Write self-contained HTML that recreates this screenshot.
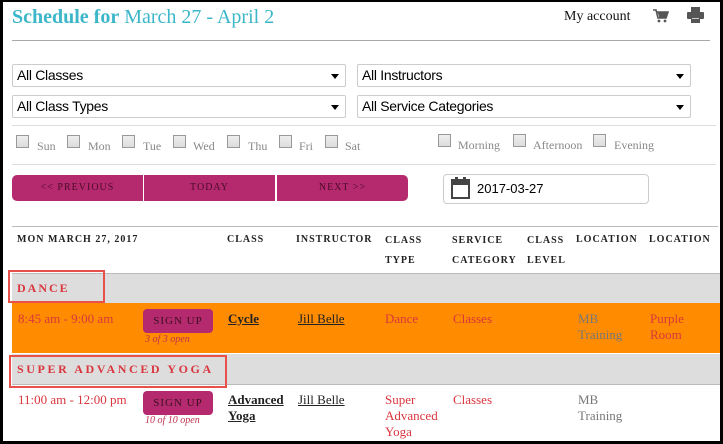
<!DOCTYPE html>
<html><head><meta charset="utf-8"><style>
*{margin:0;padding:0;box-sizing:border-box}
body{width:723px;height:444px;background:#000;position:relative;overflow:hidden;font-family:"Liberation Serif",serif}
#pg{position:absolute;left:3px;top:2px;width:717px;height:439px;background:#fff;overflow:hidden}
.a{position:absolute}
.hr{position:absolute;height:1px;background:#ccc}
.sel{position:absolute;height:23px;border:1px solid #ccc;border-radius:2px;font-family:"Liberation Sans",sans-serif;font-size:14px;color:#000;padding:2px 0 0 4px;background:#fff;letter-spacing:-0.3px}
.sel:after{content:"";position:absolute;right:6px;top:9px;border-left:4px solid transparent;border-right:4px solid transparent;border-top:5px solid #000}
.cb{position:absolute;width:13px;height:13px;border:1px solid #999;background:linear-gradient(#eee,#ddd)}
.cl{position:absolute;font-size:12px;color:#888}
.btn{position:absolute;top:173px;height:26px;background:#b5296e;color:#4a0c28;font-size:10px;letter-spacing:1px;text-align:center;line-height:25px}
.th{position:absolute;font-size:10px;font-weight:bold;letter-spacing:1px;color:#222}
.red{color:#d9363e}
.su{position:absolute;width:70px;height:24px;background:#b5296e;border-radius:4px;color:#3a1020;font-size:11px;letter-spacing:1px;text-align:center;line-height:25px}
.op{position:absolute;font-size:10px;font-style:italic;color:#c0304a}
.td{position:absolute;font-size:13px;line-height:16px}
.lk{font-weight:bold;text-decoration:underline;color:#222}
</style></head><body><div id="pg">
<div class="a" style="left:9px;top:4px;font-size:20px;color:#3cb6c9"><b>Schedule for</b> March 27 - April 2</div>
<div class="a" style="left:561px;top:7px;font-size:14px;color:#111">My account</div>
<svg class="a" style="left:650px;top:7px" width="16" height="14" viewBox="0 0 16 14"><path d="M0 1h3l2 8h8l2-6H4" fill="none" stroke="#555" stroke-width="1.6"/><path d="M4.5 3h10l-2 6h-6z" fill="#555"/><circle cx="6" cy="12" r="1.4" fill="#555"/><circle cx="12" cy="12" r="1.4" fill="#555"/></svg>
<svg class="a" style="left:684px;top:5px" width="17" height="17" viewBox="0 0 17 17"><rect x="4" y="0" width="9" height="5" fill="#555"/><rect x="0" y="5" width="17" height="7" rx="1" fill="#555"/><rect x="4" y="10" width="9" height="6" fill="#555"/><rect x="5" y="11" width="7" height="1" fill="#ccc"/></svg>
<div class="hr" style="left:9px;top:38px;width:698px;background:#aaa"></div>
<div class="sel" style="left:9px;top:62px;width:334px">All Classes</div>
<div class="sel" style="left:354px;top:62px;width:334px">All Instructors</div>
<div class="sel" style="left:9px;top:93px;width:334px">All Class Types</div>
<div class="sel" style="left:354px;top:93px;width:334px">All Service Categories</div>
<div class="hr" style="left:9px;top:123px;width:704px;background:#ddd"></div>
<div class="cb" style="left:13px;top:133px"></div><div class="cl" style="left:34px;top:137px">Sun</div>
<div class="cb" style="left:64px;top:133px"></div><div class="cl" style="left:85px;top:137px">Mon</div>
<div class="cb" style="left:119px;top:133px"></div><div class="cl" style="left:140px;top:137px">Tue</div>
<div class="cb" style="left:170px;top:133px"></div><div class="cl" style="left:190px;top:137px">Wed</div>
<div class="cb" style="left:224px;top:133px"></div><div class="cl" style="left:245px;top:137px">Thu</div>
<div class="cb" style="left:276px;top:133px"></div><div class="cl" style="left:296px;top:137px">Fri</div>
<div class="cb" style="left:322px;top:133px"></div><div class="cl" style="left:342px;top:137px">Sat</div>
<div class="cb" style="left:435px;top:132px"></div><div class="cl" style="left:455px;top:136px">Morning</div>
<div class="cb" style="left:510px;top:132px"></div><div class="cl" style="left:530px;top:136px">Afternoon</div>
<div class="cb" style="left:590px;top:132px"></div><div class="cl" style="left:611px;top:136px">Evening</div>
<div class="hr" style="left:9px;top:162px;width:704px;background:#ddd"></div>
<div class="btn" style="left:9px;width:131px;border-radius:5px 0 0 5px">&lt;&lt; PREVIOUS</div>
<div class="btn" style="left:141px;width:131px">TODAY</div>
<div class="btn" style="left:274px;width:131px;border-radius:0 5px 5px 0">NEXT &gt;&gt;</div>
<div class="a" style="left:440px;top:172px;width:206px;height:30px;border:1px solid #ccc;border-radius:4px"></div>
<svg class="a" style="left:448px;top:175px" width="19" height="22" viewBox="0 0 19 22"><rect x="1" y="3" width="17" height="18" fill="none" stroke="#444" stroke-width="2"/><rect x="1" y="3" width="17" height="5" fill="#444"/><rect x="4" y="0" width="3" height="5" fill="#444"/><rect x="12" y="0" width="3" height="5" fill="#444"/></svg>
<div class="a" style="left:474px;top:179px;font-family:'Liberation Sans',sans-serif;font-size:13px">2017-03-27</div>
<div class="hr" style="left:9px;top:224px;width:706px;background:#bbb"></div>
<div class="th" style="left:14px;top:232px">MON MARCH 27, 2017</div>
<div class="th" style="left:224px;top:232px">CLASS</div>
<div class="th" style="left:293px;top:232px">INSTRUCTOR</div>
<div class="th" style="left:382px;top:229px;line-height:20px">CLASS<br>TYPE</div>
<div class="th" style="left:449px;top:229px;line-height:20px">SERVICE<br>CATEGORY</div>
<div class="th" style="left:524px;top:229px;line-height:20px">CLASS<br>LEVEL</div>
<div class="th" style="left:573px;top:232px">LOCATION</div>
<div class="th" style="left:646px;top:232px">LOCATION</div>
<div class="a" style="left:9px;top:271px;width:710px;height:30px;background:#ddd;border-top:1px solid #bbb"></div>
<div class="a" style="left:5px;top:268px;width:97px;height:33px;border:2px solid #e8504a"></div>
<div class="a red" style="left:14px;top:279px;font-size:12px;font-weight:bold;letter-spacing:2px">DANCE</div>
<div class="a" style="left:9px;top:301px;width:710px;height:50px;background:#ff8c00"></div>
<div class="td red" style="left:15px;top:309px">8:45 am - 9:00 am</div>
<div class="su" style="left:140px;top:307px">SIGN UP</div>
<div class="op" style="left:142px;top:332px">3 of 3 open</div>
<div class="td lk" style="left:225px;top:309px">Cycle</div>
<div class="td lk" style="left:295px;top:309px;font-weight:normal">Jill Belle</div>
<div class="td red" style="left:382px;top:309px">Dance</div>
<div class="td red" style="left:450px;top:309px">Classes</div>
<div class="td" style="left:575px;top:309px;color:#777">MB<br>Training</div>
<div class="td red" style="left:647px;top:309px">Purple<br>Room</div>
<div class="a" style="left:9px;top:352px;width:710px;height:31px;background:#ddd;border-bottom:1px solid #bbb"></div>
<div class="a" style="left:6px;top:353px;width:218px;height:33px;border:2px solid #e8504a"></div>
<div class="a red" style="left:14px;top:360px;font-size:12px;font-weight:bold;letter-spacing:2.6px">SUPER ADVANCED YOGA</div>
<div class="td red" style="left:15px;top:390px">11:00 am - 12:00 pm</div>
<div class="su" style="left:140px;top:389px">SIGN UP</div>
<div class="op" style="left:142px;top:413px">10 of 10 open</div>
<div class="td lk" style="left:225px;top:390px">Advanced<br>Yoga</div>
<div class="td lk" style="left:295px;top:390px;font-weight:normal">Jill Belle</div>
<div class="td red" style="left:382px;top:390px">Super<br>Advanced<br>Yoga</div>
<div class="td red" style="left:450px;top:390px">Classes</div>
<div class="td" style="left:575px;top:390px;color:#777">MB<br>Training</div>
</div></body></html>
